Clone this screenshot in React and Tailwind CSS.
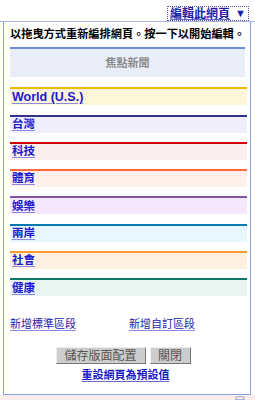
import React from 'react'

const sections = [
  { label: 'World (U.S.)', latin: true, line: 'border-[#f5b800]', bg: 'bg-[#fff6d9]' },
  { label: '台灣', line: 'border-[#2f3389]', bg: 'bg-[#eeeefd]' },
  { label: '科技', line: 'border-[#cc0000]', bg: 'bg-[#fdeeee]' },
  { label: '體育', line: 'border-[#ff6a3d]', bg: 'bg-[#fff0ea]' },
  { label: '娛樂', line: 'border-[#7f55a8]', bg: 'bg-[#f5e8fd]' },
  { label: '兩岸', line: 'border-[#0578ae]', bg: 'bg-[#e8f7fd]' },
  { label: '社會', line: 'border-[#ff9a33]', bg: 'bg-[#fff0e1]' },
  { label: '健康', line: 'border-[#0e7868]', bg: 'bg-[#e8f5f3]' },
]

const cjk = "font-['Liberation_Sans','Noto_Sans_CJK_TC',sans-serif]"

function Section({ s }) {
    return (
        <div className={`h-[18px] ml-[6px] mr-[3px] border-t-2 ${s.line} ${s.bg} flex items-center px-[2px]`}>
            <span className={`font-bold text-[#1a1acc] underline decoration-[#8a8ae0] underline-offset-2 leading-none ${s.latin ? 'text-[12.5px]' : 'text-[11.5px]'}`}>
                {s.label}
            </span>
        </div>
    )
}

export default function App() {
    return (
        <div className={`w-[255px] h-[400px] bg-white overflow-hidden relative ${cjk}`}>

            {/* top bar with edit link */}
            <div className="h-[21px] flex justify-end items-end pr-[6px]">
                <div className="h-[15px] px-[2px] border border-dotted border-[#5555aa] flex items-center">
                    <span className="text-[12px] font-bold text-[#1c1ca8] underline decoration-[#6a6ad0] leading-none">
                        編輯此網頁
                    </span>
                    <span className="text-[11px] text-[#1c1ca8] ml-[5px] leading-none">▼</span>
                </div>
            </div>

            {/* divider */}
            <div className="h-px bg-[#a9b6dc]" />

            {/* panel */}
            <div className="ml-[3px] w-[248px] h-[373px] border-x border-b border-[#8ea1e4] flex flex-col">

                <div className="pt-[7px] pl-[6px] text-[11.2px] font-bold text-black leading-none whitespace-nowrap">
                    以拖曳方式重新編排網頁。按一下以開始編輯。
                </div>

                {/* focus news */}
                <div className="mt-[7px] ml-[6px] mr-[5px] h-[30px] border-t-2 border-[#6f8fdb] bg-[#e9edf8] flex items-center justify-center">
                    <span className="text-[11px] font-bold text-[#8a8a8a] leading-none">焦點新聞</span>
                </div>

                {/* sections */}
                <div className="mt-[10px] flex flex-col gap-[9.3px]">
                    {sections.map((s) => (
                        <Section key={s.label} s={s} />
                    ))}
                </div>

                {/* add links */}
                <div className="mt-[23px] ml-[6px] flex text-[11px] text-[#2222aa] leading-none">
                    <span className="underline decoration-[#8a8ae0] underline-offset-2">新增標準區段</span>
                    <span className="ml-[53px] underline decoration-[#8a8ae0] underline-offset-2">新增自訂區段</span>
                </div>

                {/* buttons */}
                <div className="mt-[17px] flex justify-center gap-[4px] pr-[8px]">
                    <button className="w-[90px] h-[17px] bg-[#cdcdcd] border border-t-[#eeeeee] border-l-[#eeeeee] border-r-[#777777] border-b-[#777777] text-[12px] text-[#555555] leading-none">
                        儲存版面配置
                    </button>
                    <button className="w-[41px] h-[17px] bg-[#cdcdcd] border border-t-[#eeeeee] border-l-[#eeeeee] border-r-[#777777] border-b-[#777777] text-[12px] text-[#555555] leading-none">
                        關閉
                    </button>
                </div>

                <div className="mt-[6px] flex justify-center pr-[3px]">
                    <span className="text-[11px] font-bold text-[#1a1acc] underline decoration-[#6a6ad0] underline-offset-2 leading-none">
                        重設網頁為預設值
                    </span>
                </div>
            </div>

            {/* page behind */}
            <div className="h-[6px] bg-[#fbecec] flex justify-end pr-[10px]">
                <div className="w-[10px] h-[4px] mt-[1px] border border-[#aab4cc] rounded-t-sm" />
            </div>
        </div>
    )
}
